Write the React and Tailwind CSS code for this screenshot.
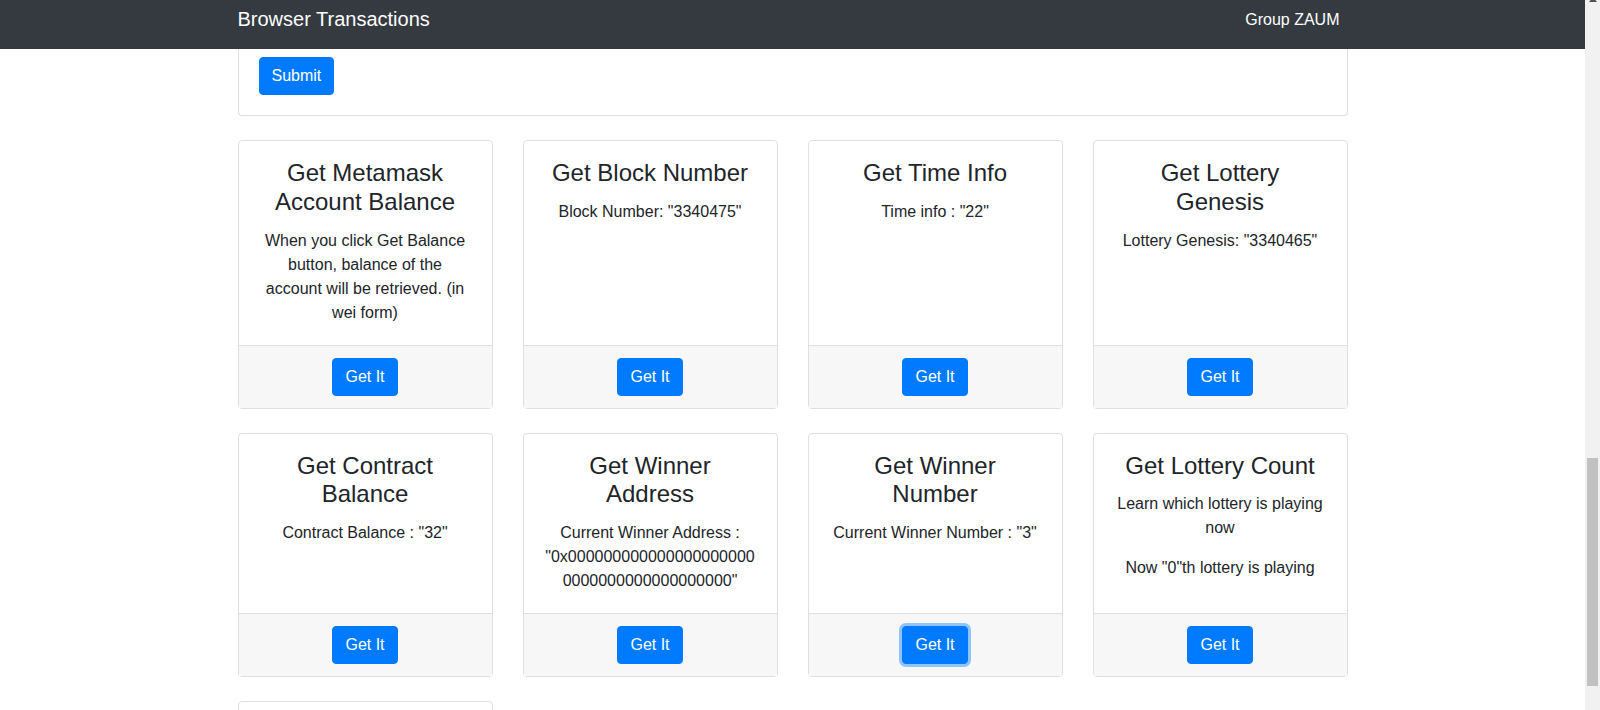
const cards = [
  {
    title: 'Get Metamask Account Balance',
    lines: ['When you click Get Balance button, balance of the account will be retrieved. (in wei form)'],
  },
  { title: 'Get Block Number', lines: ['Block Number: "3340475"'] },
  { title: 'Get Time Info', lines: ['Time info : "22"'] },
  { title: 'Get Lottery Genesis', lines: ['Lottery Genesis: "3340465"'] },
  { title: 'Get Contract Balance', lines: ['Contract Balance : "32"'] },
  {
    title: 'Get Winner Address',
    lines: ['Current Winner Address : "0x0000000000000000000000000000000000000000"'],
  },
  { title: 'Get Winner Number', lines: ['Current Winner Number : "3"'], focused: true },
  {
    title: 'Get Lottery Count',
    lines: ['Learn which lottery is playing now', 'Now "0"th lottery is playing'],
  },
];

function Button({ children, focused }) {
  return (
    <button
      className={
        'h-[38px] px-3 rounded-[4px] bg-[#007bff] text-white text-base leading-6 border border-[#007bff] ' +
        (focused ? 'shadow-[0_0_0_3px_rgba(38,143,255,0.5)]' : '')
      }
    >
      {children}
    </button>
  );
}

function Card({ title, lines, focused }) {
  return (
    <div className="flex flex-col bg-white border border-[#dfdfdf] rounded-[4px] text-center">
      <div className="flex-1 px-5 pt-[18px] pb-5">
        <h4 className="text-2xl leading-[1.2] mb-3 font-normal">{title}</h4>
        {lines.map((l, i) => (
          <p
            key={i}
            className={'text-base leading-6 break-words ' + (i < lines.length - 1 ? 'mb-4' : '')}
          >
            {l}
          </p>
        ))}
      </div>
      <div className="bg-[#f7f7f7] border-t border-[#dfdfdf] px-5 py-3 flex justify-center">
        <Button focused={focused}>Get It</Button>
      </div>
    </div>
  );
}

export default function App() {
  return (
    <div className="h-[710px] overflow-hidden flex bg-white text-[#212529] font-['Liberation_Sans',Arial,sans-serif]">
      <div className="flex-1 min-w-0">
        <nav className="h-[49px] bg-[#343a40]">
          <div className="w-[1110px] mx-auto flex items-start justify-between">
            <span className="mt-[4px] text-xl leading-[30px] text-white">Browser Transactions</span>
            <span className="mt-[8px] pr-2 text-base leading-6 text-white">Group ZAUM</span>
          </div>
        </nav>

        <main className="w-[1110px] mx-auto">
          <div className="border border-t-0 border-[#dfdfdf] rounded-b-[4px] px-5 pt-2 pb-5 mb-6">
            <Button>Submit</Button>
          </div>

          <div className="grid grid-cols-4 gap-x-[30px] gap-y-6">
            {cards.map((c) => (
              <Card key={c.title} {...c} />
            ))}
            {/* next row: only the top edge of its first card is in view */}
            <div className="h-[220px] bg-white border border-[#dfdfdf] rounded-[4px]" />
          </div>
        </main>
      </div>

      <div className="w-[15px] shrink-0 bg-[#f1f1f1] relative">
        <svg className="absolute left-[4px] top-[-3px]" width="8" height="6" viewBox="0 0 8 6">
          <path d="M4 0 L8 5 L0 5 Z" fill="#505050" />
        </svg>
        <div className="absolute left-[2px] right-[2px] top-[458px] h-[228px] bg-[#c1c1c1]" />
      </div>
    </div>
  );
}
